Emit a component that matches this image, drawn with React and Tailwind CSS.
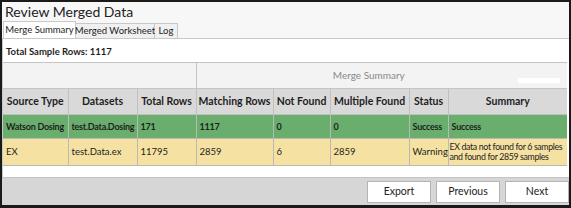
export default function App() {
  const cols = [65, 69, 59, 77, 57, 79, 39, 119];
  const heads = ["Source Type", "Datasets", "Total Rows", "Matching Rows", "Not Found", "Multiple Found", "Status", "Summary"];
  const rows = [
    {
      bg: "bg-[#69ae6d]",
      h: "h-[24px]",
      bold: true,
      cells: ["Watson Dosing", "test.Data.Dosing", "171", "1117", "0", "0", "Success", "Success"],
    },
    {
      bg: "bg-[#f5e2a2]",
      h: "h-[27px]",
      bold: false,
      cells: [
        "EX",
        "test.Data.ex",
        "11795",
        "2859",
        "6",
        "2859",
        "Warning",
        <>
          EX data not found for 6 samples
          <br />
          and found for 2859 samples
        </>,
      ],
    },
  ];

  return (
    <div
      className="w-[571px] h-[208px] border-[#1a1a1a] border-t-2 border-l-2 border-r-2 border-b-[3px] bg-[#f7f7f7] flex flex-col text-[#1e1e1e] overflow-hidden"
      style={{ fontFamily: 'Lato, "Noto Sans", sans-serif' }}
    >
      {/* TITLE */}
      <div className="h-[19px] pl-[3px] text-[14px] leading-[19px] text-[#222]">Review Merged Data</div>

      {/* TABS */}
      <div className="h-[17px] flex items-end pl-[1px] text-[9.5px] whitespace-nowrap">
        <div className="h-[17px] w-[73px] bg-white border border-b-0 border-[#c8c8c8] flex items-center justify-center leading-none">
          Merge Summary
        </div>
        <div className="h-[15px] w-[79px] bg-[#f0f0f0] border border-b-0 border-l-0 border-[#c8c8c8] flex items-center justify-center leading-none">
          Merged Worksheet
        </div>
        <div className="h-[15px] w-[23px] bg-[#f0f0f0] border border-b-0 border-l-0 border-[#c8c8c8] flex items-center justify-center leading-none">
          Log
        </div>
      </div>

      {/* CONTENT */}
      <div className="flex-1 bg-white border-t border-l border-[#c8c8c8] flex flex-col">
        <div className="pt-[7px] pb-[4px] pl-[3px] text-[9.5px] font-bold leading-[12px]">Total Sample Rows: 1117</div>
        <table className="table-fixed border-collapse text-[9.5px] w-[564px]">
          <colgroup>
            {cols.map((w, i) => (
              <col key={i} style={{ width: w }} />
            ))}
          </colgroup>
          <thead>
            <tr className="h-[26px] bg-[#f3f3f3]">
              <th colSpan={3} className="border border-[#c4c4c4] border-l-0"></th>
              <th colSpan={5} className="border border-[#c4c4c4] border-r-0 font-normal text-[#8a8a8a] text-[10px] pr-[26px] relative">
                Merge Summary
                <span className="absolute right-[7px] top-[15px] w-[42px] h-[5px] bg-white"></span>
              </th>
            </tr>
            <tr className="h-[26px] bg-[#d9d9d9]">
              {heads.map((h, i) => (
                <th key={i} className="border border-[#c0c0c0] first:border-l-0 last:border-r-0 font-bold text-center whitespace-nowrap px-0 text-[10.5px]">
                  {h}
                </th>
              ))}
            </tr>
          </thead>
          <tbody>
            {rows.map((r, ri) => (
              <tr key={ri} className={`${r.bg} ${r.h}`}>
                {r.cells.map((c, ci) => (
                  <td
                    key={ci}
                    className={`border border-[#b9b9b9] first:border-l-0 last:border-r-0 align-middle whitespace-nowrap overflow-hidden ${
                      ci === 7 && !r.bold ? "pl-[1px] pr-0 leading-[10px] text-[8.8px] tracking-[-0.35px]" : "px-[3px]"
                    } ${r.bold ? "font-bold text-[9px] tracking-[-0.25px]" : "font-normal"}`}
                  >
                    {c}
                  </td>
                ))}
              </tr>
            ))}
          </tbody>
        </table>
      </div>

      {/* FOOTER */}
      <div className="h-[28px] bg-[#d6d6d6] border-t border-[#c4c4c4] flex justify-end items-start pt-[3px] gap-[5px] text-[10.5px]">
        {["Export", "Previous", "Next"].map((b) => (
          <button
            key={b}
            className="h-[22px] w-[64px] bg-white border border-[#b4b4b4] text-[#222] flex items-center justify-center"
          >
            {b}
          </button>
        ))}
      </div>
    </div>
  );
}
